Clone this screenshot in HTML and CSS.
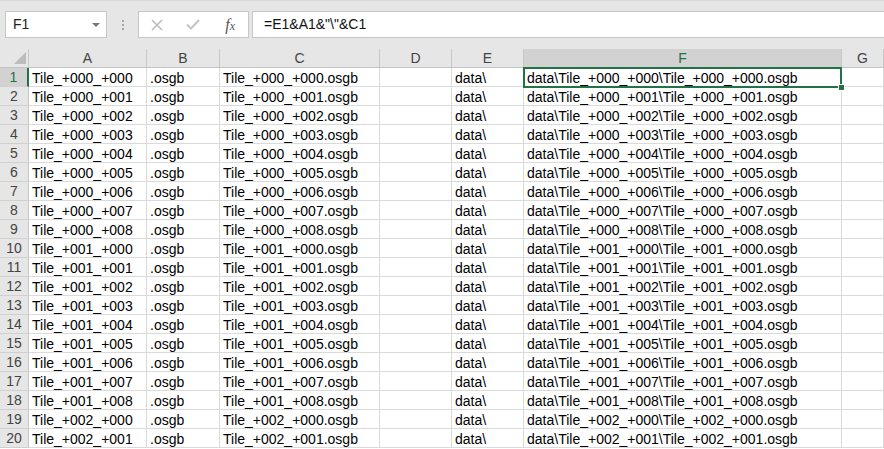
FILE: index.html
```html
<!DOCTYPE html>
<html>
<head>
<meta charset="utf-8">
<link rel="stylesheet" href="styles.css">
</head>
<body>
<div class="toolbar">
  <div class="namebox"><span class="name">F1</span><span class="caret"></span></div>
  <div class="sep"><i></i><i></i><i></i></div>
  <div class="fxbox">
    <span class="slot"><svg width="12" height="12" viewBox="0 0 12 12"><path d="M1 1L11 11M11 1L1 11" stroke="#bdbdbd" stroke-width="1.6" fill="none"/></svg></span>
    <span class="slot"><svg width="14" height="11" viewBox="0 0 14 11"><path d="M1 5.5L5 9.5L13 1" stroke="#c4c4c4" stroke-width="2" fill="none"/></svg></span>
    <span class="slot fx"><span class="f">f</span><span class="x">x</span></span>
  </div>
  <div class="formula">=E1&amp;A1&amp;"\"&amp;C1</div>
</div>
<div class="sheet">
  <div class="row head">
    <div class="corner"><span class="tri"></span></div>
    <div class="ch">A</div><div class="ch">B</div><div class="ch">C</div><div class="ch">D</div><div class="ch">E</div><div class="ch sel">F</div><div class="ch">G</div>
  </div>
  <div class="row"><div class="rh sel">1</div><div class="c">Tile_+000_+000</div><div class="c">.osgb</div><div class="c">Tile_+000_+000.osgb</div><div class="c"></div><div class="c">data\</div><div class="c active">data\Tile_+000_+000\Tile_+000_+000.osgb</div><div class="c"></div></div>
  <div class="row"><div class="rh">2</div><div class="c">Tile_+000_+001</div><div class="c">.osgb</div><div class="c">Tile_+000_+001.osgb</div><div class="c"></div><div class="c">data\</div><div class="c">data\Tile_+000_+001\Tile_+000_+001.osgb</div><div class="c"></div></div>
  <div class="row"><div class="rh">3</div><div class="c">Tile_+000_+002</div><div class="c">.osgb</div><div class="c">Tile_+000_+002.osgb</div><div class="c"></div><div class="c">data\</div><div class="c">data\Tile_+000_+002\Tile_+000_+002.osgb</div><div class="c"></div></div>
  <div class="row"><div class="rh">4</div><div class="c">Tile_+000_+003</div><div class="c">.osgb</div><div class="c">Tile_+000_+003.osgb</div><div class="c"></div><div class="c">data\</div><div class="c">data\Tile_+000_+003\Tile_+000_+003.osgb</div><div class="c"></div></div>
  <div class="row"><div class="rh">5</div><div class="c">Tile_+000_+004</div><div class="c">.osgb</div><div class="c">Tile_+000_+004.osgb</div><div class="c"></div><div class="c">data\</div><div class="c">data\Tile_+000_+004\Tile_+000_+004.osgb</div><div class="c"></div></div>
  <div class="row"><div class="rh">6</div><div class="c">Tile_+000_+005</div><div class="c">.osgb</div><div class="c">Tile_+000_+005.osgb</div><div class="c"></div><div class="c">data\</div><div class="c">data\Tile_+000_+005\Tile_+000_+005.osgb</div><div class="c"></div></div>
  <div class="row"><div class="rh">7</div><div class="c">Tile_+000_+006</div><div class="c">.osgb</div><div class="c">Tile_+000_+006.osgb</div><div class="c"></div><div class="c">data\</div><div class="c">data\Tile_+000_+006\Tile_+000_+006.osgb</div><div class="c"></div></div>
  <div class="row"><div class="rh">8</div><div class="c">Tile_+000_+007</div><div class="c">.osgb</div><div class="c">Tile_+000_+007.osgb</div><div class="c"></div><div class="c">data\</div><div class="c">data\Tile_+000_+007\Tile_+000_+007.osgb</div><div class="c"></div></div>
  <div class="row"><div class="rh">9</div><div class="c">Tile_+000_+008</div><div class="c">.osgb</div><div class="c">Tile_+000_+008.osgb</div><div class="c"></div><div class="c">data\</div><div class="c">data\Tile_+000_+008\Tile_+000_+008.osgb</div><div class="c"></div></div>
  <div class="row"><div class="rh">10</div><div class="c">Tile_+001_+000</div><div class="c">.osgb</div><div class="c">Tile_+001_+000.osgb</div><div class="c"></div><div class="c">data\</div><div class="c">data\Tile_+001_+000\Tile_+001_+000.osgb</div><div class="c"></div></div>
  <div class="row"><div class="rh">11</div><div class="c">Tile_+001_+001</div><div class="c">.osgb</div><div class="c">Tile_+001_+001.osgb</div><div class="c"></div><div class="c">data\</div><div class="c">data\Tile_+001_+001\Tile_+001_+001.osgb</div><div class="c"></div></div>
  <div class="row"><div class="rh">12</div><div class="c">Tile_+001_+002</div><div class="c">.osgb</div><div class="c">Tile_+001_+002.osgb</div><div class="c"></div><div class="c">data\</div><div class="c">data\Tile_+001_+002\Tile_+001_+002.osgb</div><div class="c"></div></div>
  <div class="row"><div class="rh">13</div><div class="c">Tile_+001_+003</div><div class="c">.osgb</div><div class="c">Tile_+001_+003.osgb</div><div class="c"></div><div class="c">data\</div><div class="c">data\Tile_+001_+003\Tile_+001_+003.osgb</div><div class="c"></div></div>
  <div class="row"><div class="rh">14</div><div class="c">Tile_+001_+004</div><div class="c">.osgb</div><div class="c">Tile_+001_+004.osgb</div><div class="c"></div><div class="c">data\</div><div class="c">data\Tile_+001_+004\Tile_+001_+004.osgb</div><div class="c"></div></div>
  <div class="row"><div class="rh">15</div><div class="c">Tile_+001_+005</div><div class="c">.osgb</div><div class="c">Tile_+001_+005.osgb</div><div class="c"></div><div class="c">data\</div><div class="c">data\Tile_+001_+005\Tile_+001_+005.osgb</div><div class="c"></div></div>
  <div class="row"><div class="rh">16</div><div class="c">Tile_+001_+006</div><div class="c">.osgb</div><div class="c">Tile_+001_+006.osgb</div><div class="c"></div><div class="c">data\</div><div class="c">data\Tile_+001_+006\Tile_+001_+006.osgb</div><div class="c"></div></div>
  <div class="row"><div class="rh">17</div><div class="c">Tile_+001_+007</div><div class="c">.osgb</div><div class="c">Tile_+001_+007.osgb</div><div class="c"></div><div class="c">data\</div><div class="c">data\Tile_+001_+007\Tile_+001_+007.osgb</div><div class="c"></div></div>
  <div class="row"><div class="rh">18</div><div class="c">Tile_+001_+008</div><div class="c">.osgb</div><div class="c">Tile_+001_+008.osgb</div><div class="c"></div><div class="c">data\</div><div class="c">data\Tile_+001_+008\Tile_+001_+008.osgb</div><div class="c"></div></div>
  <div class="row"><div class="rh">19</div><div class="c">Tile_+002_+000</div><div class="c">.osgb</div><div class="c">Tile_+002_+000.osgb</div><div class="c"></div><div class="c">data\</div><div class="c">data\Tile_+002_+000\Tile_+002_+000.osgb</div><div class="c"></div></div>
  <div class="row"><div class="rh">20</div><div class="c">Tile_+002_+001</div><div class="c">.osgb</div><div class="c">Tile_+002_+001.osgb</div><div class="c"></div><div class="c">data\</div><div class="c">data\Tile_+002_+001\Tile_+002_+001.osgb</div><div class="c"></div></div>
</div>
</body>
</html>
```
FILE: styles.css
```css
html, body {
  margin: 0;
  padding: 0;
  overflow: hidden;
  background: #ffffff;
  font-family: "Liberation Sans", Arial, sans-serif;
  font-size: 14px;
  color: #000;
}

.toolbar {
  height: 49px;
  box-sizing: border-box;
  background: #e6e6e6;
  border-top: 1px solid #d8d8d8;
  padding: 10px 0 0 5px;
  display: flex;
  align-items: flex-start;
}

.namebox {
  width: 102px;
  height: 27px;
  box-sizing: border-box;
  background: #fff;
  border: 1px solid #c6c6c6;
  display: flex;
  align-items: center;
  justify-content: space-between;
  padding: 0 6px 0 7px;
}

.name {
  color: #222;
  line-height: 25px;
}

.caret {
  width: 0;
  height: 0;
  border-left: 4px solid transparent;
  border-right: 4px solid transparent;
  border-top: 4px solid #777;
}

.sep {
  width: 31px;
  height: 27px;
  display: flex;
  flex-direction: column;
  align-items: center;
  justify-content: center;
  gap: 2px;
}

.sep i {
  display: block;
  width: 2px;
  height: 2px;
  background: #a6a6a6;
}

.fxbox {
  width: 111px;
  height: 27px;
  box-sizing: border-box;
  background: #fff;
  border: 1px solid #c6c6c6;
  display: flex;
  align-items: center;
}

.slot {
  width: 36px;
  height: 25px;
  display: flex;
  align-items: center;
  justify-content: center;
}

.fx {
  font-family: "Liberation Serif", "Times New Roman", serif;
  font-style: italic;
  color: #555;
  padding-left: 2px;
}

.fx .f {
  font-size: 16px;
}

.fx .x {
  font-size: 12px;
  margin-top: 3px;
}

.formula {
  flex: 1;
  height: 27px;
  box-sizing: border-box;
  margin-left: 3px;
  margin-right: -2px;
  background: #fff;
  border: 1px solid #c6c6c6;
  padding-left: 11px;
  line-height: 25px;
  color: #111;
}

.sheet {
  display: flex;
  flex-direction: column;
}

.row {
  display: grid;
  grid-template-columns: 29px 118px 73px 160px 72px 72px 318px 1fr;
  height: 19px;
}

.row > div {
  box-sizing: border-box;
  height: 19px;
  border-right: 1px solid #dadada;
  border-bottom: 1px solid #dadada;
  white-space: nowrap;
  overflow: hidden;
}

.head > div {
  background: #e6e6e6;
  border-right-color: #c8c8c8;
  border-bottom-color: #c4c4c4;
  text-align: center;
  line-height: 18px;
  color: #444;
}

.corner {
  position: relative;
}

.tri {
  position: absolute;
  right: 2px;
  bottom: 3px;
  width: 0;
  height: 0;
  border-left: 12px solid transparent;
  border-bottom: 12px solid #bcbcbc;
}

.row > .rh {
  background: #e6e6e6;
  border-right-color: #c8c8c8;
  border-bottom-color: #d0d0d0;
  text-align: center;
  line-height: 18px;
  color: #444;
}

.row > .rh.sel {
  background: #d2d2d2;
  color: #217346;
  border-right: 2px solid #217346;
}

.head > .ch.sel {
  background: #d2d2d2;
  color: #217346;
}

.c {
  padding: 1px 0 0 3px;
  line-height: 18px;
}

.row > .c.active {
  position: relative;
  overflow: visible;
}

.active::after {
  content: "";
  position: absolute;
  left: -1px;
  top: -1px;
  right: -1px;
  bottom: -2px;
  border: 2px solid #217346;
  pointer-events: none;
  z-index: 1;
}

.active::before {
  content: "";
  position: absolute;
  right: -4px;
  bottom: -5px;
  width: 5px;
  height: 5px;
  background: #217346;
  border: 1px solid #fff;
  z-index: 2;
}
```
